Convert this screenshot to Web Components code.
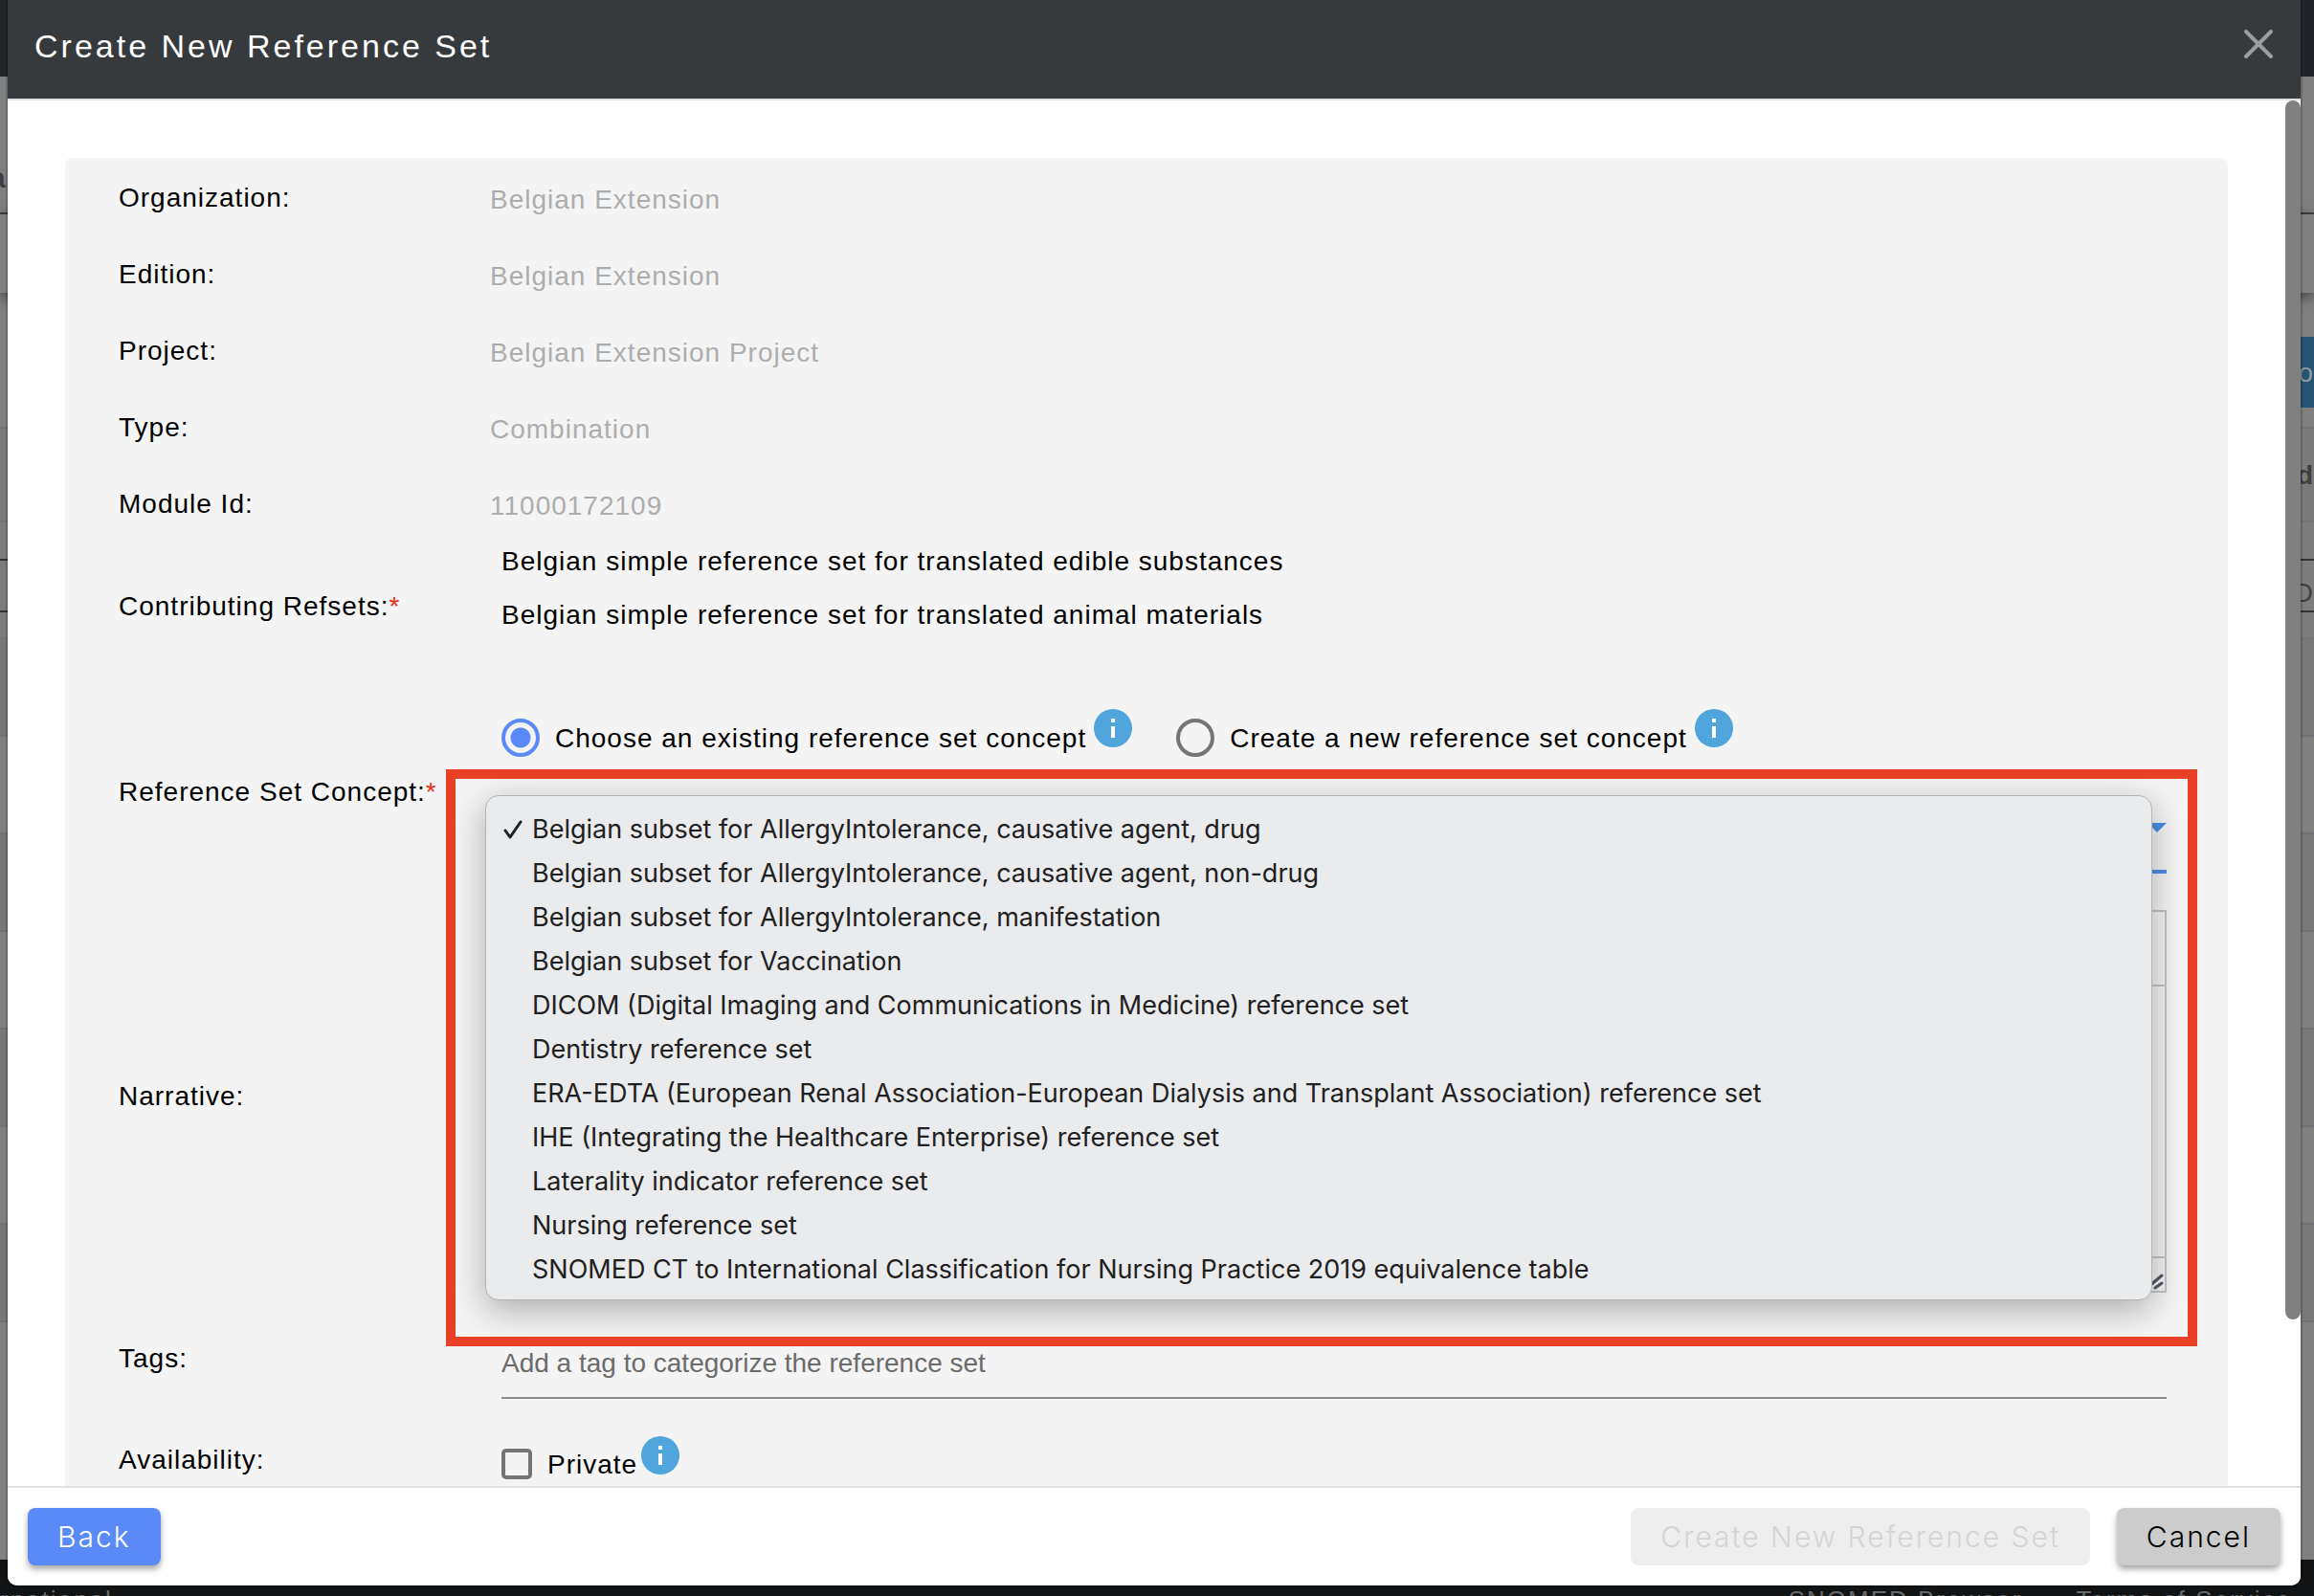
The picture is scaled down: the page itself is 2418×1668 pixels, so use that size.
<!DOCTYPE html>
<html lang="en">
<head>
<meta charset="utf-8">
<title>Create New Reference Set</title>
<style>
  html, body {
    margin: 0;
    height: 100%;
    overflow: hidden;
  }
  body {
    font-family: "Liberation Sans", Arial, sans-serif;
    font-size: 28px;
    line-height: 40px;
    letter-spacing: 1px;
    color: #000;
    display: grid;
  }
  page-behind, refset-dialog {
    grid-area: 1 / 1;
  }
</style>
</head>
<body>
<page-behind></page-behind>
<refset-dialog></refset-dialog>

<script>
// The dimmed page that stays visible at the edges of the dialog
class PageBehind extends HTMLElement {
  constructor() {
    super();
    this.attachShadow({ mode: "open" });
    this.shadowRoot.innerHTML = `
      <style>
        :host { display: flex; flex-direction: column; height: 100vh; overflow: hidden; background: #808080; color: #404040; }
        nav { height: 80px; flex: none; background: #212529; }
        .top { height: 144px; flex: none; border-bottom: 2px solid #404040; box-sizing: border-box; display: flex; align-items: flex-end; font-weight: 700; font-size: 30px; }
        .top span { margin: 0 0 16px -11px; }
        .crumbs { height: 82px; flex: none; box-shadow: 0 4px 14px rgba(0, 0, 0, .5); }
        .actions { flex: none; height: 142px; box-sizing: border-box; padding-top: 46px; border-bottom: 2px solid #757575; display: flex; justify-content: flex-end; align-items: flex-start; }
        .add { width: 120px; height: 74px; background: #275372; color: #909aa0; line-height: 76px; text-align: right; }
        .head { flex: none; height: 98px; box-sizing: border-box; background: #7b7b7b; border-bottom: 2px solid #757575; font-weight: 700; text-align: right; line-height: 98px; }
        .filter { flex: none; height: 122px; box-sizing: border-box; padding-top: 38px; border-bottom: 2px solid #757575; display: flex; justify-content: flex-end; background: #7d7d7d; }
        .filter div { width: 100%; height: 56px; box-sizing: border-box; border: solid #333; border-width: 2px 0; line-height: 68px; text-align: right; }
        .row { flex: none; height: 102px; box-sizing: border-box; border-bottom: 2px solid #717178; }
        .row:nth-child(even) { background: #787878; }
        .space { flex: 1; }
        footer { flex: none; height: 38px; background: #111315; color: #66686a; display: flex; gap: 56px; font-size: 26px; letter-spacing: 2px; padding: 22px 23px 0 0; box-sizing: border-box; white-space: nowrap; overflow: hidden; }
        footer span:first-child { margin-right: auto; }
      </style>
      <nav></nav>
      <div class="top"><span>ar</span></div>
      <div class="crumbs"></div>
      <div class="actions"><div class="add">o</div></div>
      <div class="head">d</div>
      <div class="filter"><div>D</div></div>
      <div class="row"></div><div class="row"></div><div class="row"></div><div class="row"></div>
      <div class="row"></div><div class="row"></div><div class="row"></div>
      <div class="space"></div>
      <footer><span>rnational</span><span>SNOMED Browser</span><span>Terms of Service</span></footer>
    `;
  }
}
customElements.define("page-behind", PageBehind);

class InfoIcon extends HTMLElement {
  constructor() {
    super();
    this.attachShadow({ mode: "open" });
    this.shadowRoot.innerHTML = `
      <style>
        :host { display: block; width: 40px; height: 40px; flex: none; }
        svg { display: block; }
      </style>
      <svg width="40" height="40" viewBox="0 0 40 40">
        <circle cx="20" cy="20" r="20" fill="#50a5dc"/>
        <path d="M18 10h4v4h-4zM18 18h4v12h-4z" fill="#fff"/>
      </svg>
    `;
  }
}
customElements.define("info-icon", InfoIcon);

// One line of the form: label on the left, control on the right
class FormRow extends HTMLElement {
  constructor() {
    super();
    this.attachShadow({ mode: "open" });
  }

  connectedCallback() {
    this.shadowRoot.innerHTML = `
      <style>
        :host { display: grid; grid-template-columns: 388px minmax(0, 1fr); align-items: center; min-height: 80px; }
        .required { color: #e8301c; }
        .label { padding-top: 2px; white-space: nowrap; }
      </style>
      <div class="label"><slot name="label"></slot>${this.hasAttribute("required") ? '<span class="required">*</span>' : ""}</div>
      <div><slot></slot></div>
    `;
  }
}
customElements.define("form-row", FormRow);

// The open list of the concept select
class OptionMenu extends HTMLElement {
  constructor() {
    super();
    this.attachShadow({ mode: "open" });
    this.options = [
      "Belgian subset for AllergyIntolerance, causative agent, drug",
      "Belgian subset for AllergyIntolerance, causative agent, non-drug",
      "Belgian subset for AllergyIntolerance, manifestation",
      "Belgian subset for Vaccination",
      "DICOM (Digital Imaging and Communications in Medicine) reference set",
      "Dentistry reference set",
      "ERA-EDTA (European Renal Association-European Dialysis and Transplant Association) reference set",
      "IHE (Integrating the Healthcare Enterprise) reference set",
      "Laterality indicator reference set",
      "Nursing reference set",
      "SNOMED CT to International Classification for Nursing Practice 2019 equivalence table",
    ];
  }

  connectedCallback() {
    const items = this.options.map(
      (text, i) => `
        <li role="option" aria-selected="${i === 0}">
          <span class="tick">${i === 0 ? '<svg width="20" height="22" viewBox="0 0 20 22"><path d="M2 12l5 7L18 3" fill="none" stroke="#1f2021" stroke-width="3" stroke-linecap="round" stroke-linejoin="round"/></svg>' : ""}</span>
          <span>${text}</span>
        </li>`
    );
    this.shadowRoot.innerHTML = `
      <style>
        :host {
          display: block;
          box-sizing: border-box;
          padding: 12px 18px 8px;
          background: #e9ebec;
          border: 1px solid #b4b4b4;
          border-radius: 14px;
          box-shadow: 0 10px 36px rgba(0, 0, 0, .3);
          font-family: Inter, "Liberation Sans", sans-serif;
          font-size: 27px;
          letter-spacing: 0;
          color: #1f2021;
        }
        ul { margin: 0; padding: 0; list-style: none; }
        li { display: flex; align-items: center; height: 46px; white-space: nowrap; }
        .tick { width: 30px; display: flex; }
      </style>
      <ul role="listbox">${items.join("")}</ul>
    `;
  }
}
customElements.define("option-menu", OptionMenu);

class RefsetDialog extends HTMLElement {
  constructor() {
    super();
    this.attachShadow({ mode: "open" });

    this.info = [
      ["org", "Organization:", "Belgian Extension"],
      ["edition", "Edition:", "Belgian Extension"],
      ["project", "Project:", "Belgian Extension Project"],
      ["type", "Type:", "Combination"],
      ["module", "Module Id:", "11000172109"],
    ];
  }

  getTemplate() {
    const template = document.createElement("template");

    const rows = this.info.map(
      ([id, label, value]) => `
        <form-row>
          <label slot="label" for="${id}">${label}</label>
          <input class="fixed" id="${id}" value="${value}" disabled>
        </form-row>`
    );

    template.innerHTML = `
      <section class="dialog" role="dialog" aria-labelledby="title">
        <header>
          <h1 id="title">Create New Reference Set</h1>
          <button class="close" aria-label="Close">
            <svg width="32" height="32" viewBox="0 0 32 32"><path d="M3 3L29 29M29 3L3 29" stroke="#9b9d9f" stroke-width="4" stroke-linecap="round"/></svg>
          </button>
        </header>

        <div class="body">
          <form class="panel">
            ${rows.join("")}

            <form-row class="contributing" required>
              <span slot="label">Contributing Refsets:</span>
              <ul class="refsets">
                <li>Belgian simple reference set for translated edible substances</li>
                <li>Belgian simple reference set for translated animal materials</li>
              </ul>
            </form-row>

            <form-row class="concept" required>
              <label slot="label" for="concept">Reference Set Concept:</label>
              <div class="choices">
                <input type="radio" name="mode" id="existing" checked>
                <label for="existing">Choose an existing reference set concept</label>
                <info-icon></info-icon>
                <input type="radio" name="mode" id="new">
                <label for="new">Create a new reference set concept</label>
                <info-icon></info-icon>
              </div>
              <div class="select">
                <select id="concept"><option>Belgian subset for AllergyIntolerance, causative agent, drug</option></select>
                <svg width="20" height="10" viewBox="0 0 20 10"><path d="M0 0h20L10 10z" fill="#4a8fe7"/></svg>
                <div class="highlight"><option-menu></option-menu></div>
              </div>
            </form-row>

            <form-row class="narrative">
              <label slot="label" for="narrative">Narrative:</label>
              <div class="editor">
                <div class="toolbar"></div>
                <textarea id="narrative"></textarea>
                <div class="status">
                  <svg width="18" height="18" viewBox="0 0 18 18"><path d="M2 14L15 3M8 16L15 11" stroke="#505a66" stroke-width="3" stroke-linecap="round"/></svg>
                </div>
              </div>
            </form-row>

            <form-row class="tags">
              <label slot="label" for="tags">Tags:</label>
              <input class="tag" id="tags" placeholder="Add a tag to categorize the reference set">
            </form-row>

            <form-row class="availability">
              <span slot="label">Availability:</span>
              <div class="private">
                <input type="checkbox" id="private">
                <label for="private">Private</label>
                <info-icon></info-icon>
              </div>
            </form-row>
          </form>
          <div class="scrollbar"><div></div></div>
        </div>

        <footer>
          <button class="back">Back</button>
          <button class="create" disabled>Create New Reference Set</button>
          <button class="cancel">Cancel</button>
        </footer>
      </section>
      ${this.getStyles()}
    `;

    return template;
  }

  getStyles() {
    return `
      <style>
        :host { display: block; height: 100vh; box-sizing: border-box; padding: 0 12px 9px 6px; z-index: 1; }
        * { box-sizing: border-box; }
        input, select, textarea, button { font: inherit; letter-spacing: inherit; margin: 0; }

        .dialog { height: 100%; display: flex; flex-direction: column; background: #fff; background-clip: padding-box; border: 2px solid rgba(0, 0, 0, .2); border-top: 0; border-radius: 0 0 12px 12px; overflow: hidden; }

        header { flex: none; height: 105px; padding: 0 24px 0 28px; display: flex; justify-content: space-between; background: #363a3d; border-bottom: 2px solid #dee2e6; }
        h1 { margin: 26px 0 0; color: #fff; font-size: 34px; font-weight: 400; letter-spacing: 3px; line-height: 44px; }
        .close { margin-top: 30px; padding: 0; width: 40px; height: 32px; border: 0; background: none; }
        .close svg { display: block; margin: 0 auto; }

        .body { flex: 1; min-height: 0; display: flex; overflow: hidden; padding-left: 60px; }
        .panel { flex: 1; min-width: 0; height: max-content; margin: 60px 60px 0 0; padding: 1px 64px 120px 56px; background: #f4f4f4; border-radius: 8px; }
        .scrollbar { flex: none; width: 16px; }
        .scrollbar div { height: 88%; background: #808080; border-radius: 8px; }

        .fixed { display: block; width: 100%; height: 40px; margin-top: 6px; padding: 0; border: 0; background: none; color: #adadad; }

        .contributing { height: 134px; }
        .refsets { height: 134px; margin: 0 0 0 12px; padding: 1px 0 0; list-style: none; display: flex; flex-direction: column; gap: 16px; }

        .concept { margin-top: 41px; }
        .choices { display: flex; height: 60px; align-items: center; margin-left: 12px; }
        .choices label { margin: 0 8px 0 16px; padding-top: 2px; }
        .choices info-icon { align-self: flex-start; margin-right: 46px; }
        input[type=radio] { appearance: none; width: 40px; height: 40px; border: 4px solid #757575; border-radius: 50%; }
        input[type=radio]:checked { border-color: #5a8af8; background: radial-gradient(circle, #5a8af8 10px, transparent 11px); }

        .select { position: relative; z-index: 1; margin: 16px 0 0 12px; }
        select { display: block; appearance: none; width: 100%; height: 96px; padding: 0; border: 0; border-bottom: 4px solid #4a8fe7; background: none; }
        .select > svg { position: absolute; right: 0; top: 43px; }
        .highlight { position: absolute; left: -58px; right: -32px; top: -13px; height: 603px; padding: 17px 37px 0 31px; border: 10px solid #e74025; overflow: hidden; }

        .narrative { margin-top: 26px; }
        .editor { height: 400px; margin: 12px 0 0 12px; display: flex; flex-direction: column; border: 2px solid #c4c4c4; }
        .toolbar { height: 78px; border-bottom: 2px solid #c4c4c4; }
        textarea { flex: 1; border: 0; background: none; resize: none; }
        .status { height: 36px; padding: 15px 0 0; display: flex; justify-content: flex-end; border-top: 2px solid #c4c4c4; }

        .tags { margin-top: 25px; }
        .tag { display: block; width: calc(100% - 12px); height: 86px; margin-left: 12px; padding: 14px 0 0; border: 0; border-bottom: 2px solid #8c8c8c; background: none; letter-spacing: 0; }
        .tag::placeholder { color: #6b6b6b; }

        .availability { margin-top: 23px; }
        .private { display: flex; align-items: center; height: 68px; padding-top: 10px; margin-left: 12px; }
        .private label { margin: 0 4px 0 16px; padding-top: 2px; }
        .private info-icon { align-self: flex-start; }
        input[type=checkbox] { appearance: none; width: 32px; height: 32px; border: 4px solid #757575; border-radius: 5px; }

        footer { flex: none; height: 104px; padding: 0 21px; display: flex; align-items: center; gap: 28px; background: #fff; border-top: 2px solid #dee2e6; }
        footer button { height: 60px; padding: 0 31px; border: 0; border-radius: 8px; font-family: Inter, "Liberation Sans", sans-serif; font-size: 30px; font-weight: 300; letter-spacing: 2px; box-shadow: 0 4px 6px rgba(0, 0, 0, .35); }
        .back { margin-right: auto; background: #5a8af8; color: #fff; }
        .create { background: #eee; color: #d4d4d4; box-shadow: none; }
        .cancel { background: #ccc; color: #000; }
      </style>
    `;
  }

  connectedCallback() {
    this.shadowRoot.appendChild(this.getTemplate().content.cloneNode(true));
  }
}
customElements.define("refset-dialog", RefsetDialog);
</script>
</body>
</html>
